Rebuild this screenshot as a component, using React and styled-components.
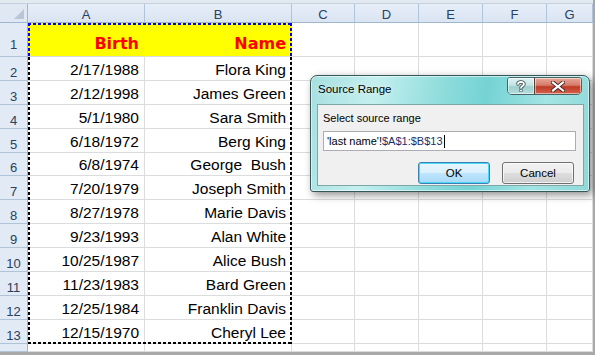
import styled, { createGlobalStyle } from 'styled-components'

const GlobalStyle = createGlobalStyle`
  html, body {
    margin: 0;
    padding: 0;
    overflow: hidden;
  }
`;

const COLS = [28, 117, 147, 63, 64, 64, 64, 46];
const LETTERS = ['A', 'B', 'C', 'D', 'E', 'F', 'G'];
const HEAD_H = 19;
const ROW1_H = 34;
const ROW_H = 23.9;

const DATA = [
    ['2/17/1988', 'Flora King'],
    ['2/12/1998', 'James Green'],
    ['5/1/1980', 'Sara Smith'],
    ['6/18/1972', 'Berg King'],
    ['6/8/1974', 'George  Bush'],
    ['7/20/1979', 'Joseph Smith'],
    ['8/27/1978', 'Marie Davis'],
    ['9/23/1993', 'Alan White'],
    ['10/25/1987', 'Alice Bush'],
    ['11/23/1983', 'Bard Green'],
    ['12/25/1984', 'Franklin Davis'],
    ['12/15/1970', 'Cheryl Lee'],
];

const Page = styled.div`
position: relative;
width: 595px;
height: 355px;
overflow: hidden;
background: #a9a9a9;
font-family: "Liberation Sans", Arial, sans-serif;
`;

const TopStrip = styled.div`
width: 593px;
height: 4px;
box-sizing: border-box;
background: #e3e9f0;
border-bottom: 1px solid #c5d1de;
`;

const SheetWrap = styled.div`
position: relative;
width: 593px;
height: 348px;
`;

const Sheet = styled.div`
display: grid;
height: 100%;
grid-template-columns: ${COLS.map((c) => c + 'px').join(' ')};
grid-template-rows: ${HEAD_H}px ${ROW1_H}px repeat(12, ${ROW_H}px) 1fr;
background: #fff;
`;

const Corner = styled.div`
position: relative;
background: #dfe8f3;
border-right: 1px solid #9eb6ce;
border-bottom: 1px solid #9eb6ce;
box-sizing: border-box;

    &::after {
        content: '';
        position: absolute;
        right: 3px;
        bottom: 3px;
        border-style: solid;
        border-width: 0 0 10px 10px;
        border-color: transparent transparent #b8c6d7 transparent;
    }
`;

const ColHead = styled.div`
display: flex;
align-items: center;
justify-content: center;
background: linear-gradient(#e6eef8, #dae5f2);
border-right: 1px solid #b1c3d8;
border-bottom: 1px solid #9eb6ce;
box-sizing: border-box;
color: #27415f;
font-size: 13px;
padding-top: 2px;
`;

const RowHead = styled.div`
display: flex;
align-items: flex-end;
justify-content: center;
background: #e2eaf5;
border-right: 1px solid #9eb6ce;
border-bottom: 1px solid #b1c3d8;
box-sizing: border-box;
color: #27415f;
font-size: 13px;
padding-bottom: ${(p) => (p.$tall ? '4px' : '0px')};
`;

const Cell = styled.div`
display: flex;
align-items: flex-end;
justify-content: flex-end;
box-sizing: border-box;
border-right: 1px solid ${(p) => (p.$head ? '#ffff00' : '#dadcdd')};
border-bottom: 1px solid #dadcdd;
padding-right: 5px;
padding-bottom: ${(p) => (p.$head ? '3px' : '1px')};
background: ${(p) => (p.$head ? '#ffff00' : '#fff')};
color: ${(p) => (p.$head ? '#ff0000' : '#000')};
font-family: ${(p) => (p.$head ? '"DejaVu Sans", Tahoma, sans-serif' : '"Liberation Sans", Arial, sans-serif')};
font-weight: ${(p) => (p.$head ? 700 : 400)};
font-size: ${(p) => (p.$head ? '16px' : '15.5px')};
white-space: pre;
`;

const dash = (color, dir) =>
    `repeating-linear-gradient(${dir}, ${color} 0 3px, transparent 3px 5px)`;

// marching ants round A1:B13, blue where they run over the yellow header
const Ants = styled.div`
position: absolute;
left: ${COLS[0]}px;
top: ${HEAD_H}px;
width: ${COLS[1] + COLS[2]}px;
height: ${ROW1_H + 12 * ROW_H}px;
pointer-events: none;
background:
    ${dash('#0000ff', '90deg')} top left / 100% 2px no-repeat,
    ${dash('#0000ff', '180deg')} top left / 2px ${ROW1_H}px no-repeat,
    ${dash('#0000ff', '180deg')} top right / 2px ${ROW1_H}px no-repeat,
    ${dash('#000', '180deg')} left 0 top ${ROW1_H}px / 2px calc(100% - ${ROW1_H}px) no-repeat,
    ${dash('#000', '180deg')} right 0 top ${ROW1_H}px / 2px calc(100% - ${ROW1_H}px) no-repeat,
    ${dash('#000', '90deg')} bottom left / 100% 2px no-repeat;
`;

const Dialog = styled.div`
position: absolute;
left: 310px;
top: 75px;
width: 280px;
height: 117px;
box-sizing: border-box;
display: flex;
flex-direction: column;
border: 1px solid #34575a;
border-radius: 7px 7px 3px 3px;
background: linear-gradient(100deg, #a6dfe0 0%, #c4efef 22%, #8fdcdc 45%, #74d3d4 60%, #a3e4e4 80%, #8fd8d9 100%);
box-shadow: inset 0 0 0 1px rgba(255, 255, 255, 0.55), 3px 3px 8px rgba(0, 0, 0, 0.45);
font-family: "Liberation Sans", Arial, sans-serif;
`;

const TitleBar = styled.div`
display: flex;
align-items: flex-start;
height: 28px;
padding-left: 7px;
`;

const Title = styled.div`
margin-top: 7px;
font-size: 11.5px;
color: #000;
text-shadow: 0 0 6px rgba(255, 255, 255, 0.8);
`;

const Caption = styled.div`
display: flex;
margin-left: auto;
margin-right: 7px;
margin-top: 1px;
border: 1px solid #476466;
border-radius: 3px 3px 5px 5px;
overflow: hidden;
height: 16px;
`;

const CapButton = styled.div`
display: flex;
align-items: center;
justify-content: center;
width: ${(p) => (p.$close ? '46px' : '26px')};
background: ${(p) =>
        p.$close
            ? 'linear-gradient(#e9a899 0%, #d67a6a 45%, #bf3a25 55%, #d5634e 100%)'
            : 'linear-gradient(#e3f2f2 0%, #c3e3e3 45%, #9fcfcf 55%, #b8dddd 100%)'};
border-left: ${(p) => (p.$close ? '1px solid #5c3a36' : 'none')};
box-shadow: inset 0 0 0 1px rgba(255, 255, 255, 0.5);
`;

const Client = styled.div`
flex: 1;
display: flex;
flex-direction: column;
margin: 0 5px 5px 6px;
padding: 7px 7px 0 5px;
background: #f0f0f0;
border: 1px solid #7ea7a8;
`;

const Label = styled.div`
font-size: 11px;
color: #000;
line-height: 13px;
`;

const Input = styled.div`
display: flex;
align-items: center;
height: 20px;
margin-top: 6px;
padding-left: 3px;
box-sizing: border-box;
background: #fff;
border: 1px solid #abadb3;
font-size: 11px;
color: #000;
white-space: pre;
`;

const Ref = styled.span`
color: #1f2f6a;
`;

const Caret = styled.span`
display: inline-block;
width: 1px;
height: 13px;
background: #000;
margin-left: 1px;
`;

const ButtonRow = styled.div`
display: flex;
justify-content: flex-end;
gap: 12px;
margin-top: 11px;
margin-right: 2px;
`;

const Button = styled.div`
display: flex;
align-items: center;
justify-content: center;
width: 72px;
height: 22px;
box-sizing: border-box;
border: 1px solid ${(p) => (p.$default ? '#3c7fb1' : '#707070')};
border-radius: 3px;
background: ${(p) =>
        p.$default
            ? 'linear-gradient(#eaf6fd 0%, #d9f0fc 48%, #bee6fd 52%, #a7d9f5 100%)'
            : 'linear-gradient(#f2f2f2 0%, #ebebeb 48%, #dddddd 52%, #cfcfcf 100%)'};
box-shadow: inset 0 0 0 1px ${(p) => (p.$default ? '#48d8fb' : 'rgba(255,255,255,0.7)')};
font-size: 11.5px;
color: #000;
`;

const HelpIcon = () => (
    <svg width="10" height="12" viewBox="0 0 10 12">
        <path d="M2 4 C2 1.5 8 1.2 8 4 C8 6 5 6 5 8" fill="none" stroke="#34494a" strokeWidth="3.4" strokeLinecap="round" />
        <path d="M2 4 C2 1.5 8 1.2 8 4 C8 6 5 6 5 8" fill="none" stroke="#fff" strokeWidth="1.8" strokeLinecap="round" />
        <circle cx="5" cy="10.6" r="1.5" fill="#fff" stroke="#34494a" strokeWidth="0.8" />
    </svg>
);

const CloseIcon = () => (
    <svg width="14" height="11" viewBox="0 0 14 11">
        <path d="M2 1.5 L12 9.5 M12 1.5 L2 9.5" stroke="#4a2622" strokeWidth="4" strokeLinecap="square" />
        <path d="M2 1.5 L12 9.5 M12 1.5 L2 9.5" stroke="#fff" strokeWidth="2.2" strokeLinecap="square" />
    </svg>
);

const App = () => {
    return (
        <Page>
            <GlobalStyle />
            <TopStrip />
            <SheetWrap>
                <Sheet>
                    <Corner />
                    {LETTERS.map((l) => (
                        <ColHead key={l}>{l}</ColHead>
                    ))}

                    <RowHead $tall>1</RowHead>
                    <Cell $head>Birth</Cell>
                    <Cell $head>Name</Cell>
                    {LETTERS.slice(2).map((l) => (
                        <Cell key={l} />
                    ))}

                    {DATA.map(([birth, name], i) => [
                        <RowHead key={'h' + i}>{i + 2}</RowHead>,
                        <Cell key={'a' + i}>{birth}</Cell>,
                        <Cell key={'b' + i}>{name}</Cell>,
                        ...LETTERS.slice(2).map((l) => <Cell key={l + i} />),
                    ])}

                    <RowHead />
                    {LETTERS.map((l) => (
                        <Cell key={'last' + l} />
                    ))}
                </Sheet>
                <Ants />
            </SheetWrap>

            <Dialog>
                <TitleBar>
                    <Title>Source Range</Title>
                    <Caption>
                        <CapButton><HelpIcon /></CapButton>
                        <CapButton $close><CloseIcon /></CapButton>
                    </Caption>
                </TitleBar>
                <Client>
                    <Label>Select source range</Label>
                    <Input>
                        'last name'!<Ref>$A$1:$B$13</Ref><Caret />
                    </Input>
                    <ButtonRow>
                        <Button $default>OK</Button>
                        <Button>Cancel</Button>
                    </ButtonRow>
                </Client>
            </Dialog>
        </Page>
    )
}

export default App;
